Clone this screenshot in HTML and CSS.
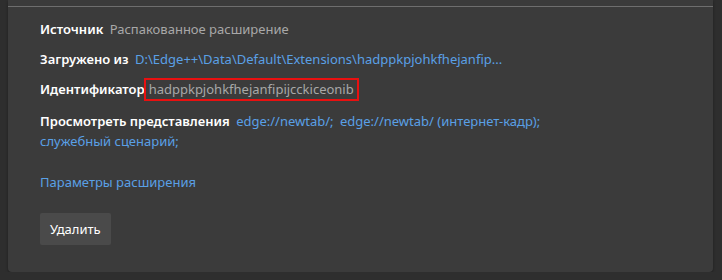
FILE: index.html
```html
<!DOCTYPE html>
<html lang="ru">
<head>
    <meta charset="UTF-8">
    <title>Сведения о расширении</title>
    <link rel="stylesheet" href="styles.css">
</head>
<body>
    <div class="card">
        <div class="sep"></div>
        <div class="details">
            <div class="row">
                <span class="label">Источник</span>
                <span class="value">Распакованное расширение</span>
            </div>
            <div class="row">
                <span class="label">Загружено из</span>
                <a class="link" href="#">D:\Edge++\Data\Default\Extensions\hadppkpjohkfhejanfip...</a>
            </div>
            <div class="row">
                <span class="label tight">Идентификатор</span><span class="id-box">hadppkpjohkfhejanfipijcckiceonib</span>
            </div>
            <div class="row views">
                <span class="label">Просмотреть представления</span>
                <a class="link" href="#">edge://newtab/;</a>
                <a class="link" href="#">edge://newtab/ (интернет-кадр);</a>
                <a class="link" href="#">служебный сценарий;</a>
            </div>
            <div class="row options">
                <a class="link" href="#">Параметры расширения</a>
            </div>
            <button class="remove">Удалить</button>
        </div>
    </div>
</body>
</html>
```

FILE: styles.css
```css
body{
    margin: 0;
    background: #2e2e2e;
    font-family: 'Noto Sans', 'Open Sans', sans-serif;
    font-size: 13px;
    color: #ffffff;
}
.card{
    margin: 0 9px 0 8px;
    height: 272px;
    box-sizing: border-box;
    padding-top: 6px;
    background: #3b3b3b;
    border-radius: 0 0 4px 4px;
    box-shadow: 0 1px 3px rgba(0,0,0,0.35);
}
.sep{
    border-top: 1px solid #6e6e6e;
}
.details{
    padding: 12px 32px 0;
}
.row{
    line-height: 20px;
    margin-bottom: 10px;
}
.label{
    font-weight: 600;
    color: #ffffff;
    margin-right: 3px;
}
.label.tight{
    margin-right: 0;
}
.value{
    color: #a8a8a8;
}
.link{
    color: #5aa0e6;
    text-decoration: none;
}
.views .link{
    margin-right: 3px;
}
.id-box{
    display: inline-block;
    line-height: 19px;
    padding: 0 3px;
    border: 2px solid #e81010;
    color: #a8a8a8;
    margin-left: -1px;
    vertical-align: top;
    margin-top: -1px;
}
.views{
    width: 560px;
}
.options{
    margin-top: 21px;
}
.remove{
    margin-top: 11px;
    height: 32px;
    padding: 0 10px;
    border: none;
    border-radius: 2px;
    background: #4a4a4a;
    color: #ffffff;
    font-family: inherit;
    font-size: 13px;
}
```
